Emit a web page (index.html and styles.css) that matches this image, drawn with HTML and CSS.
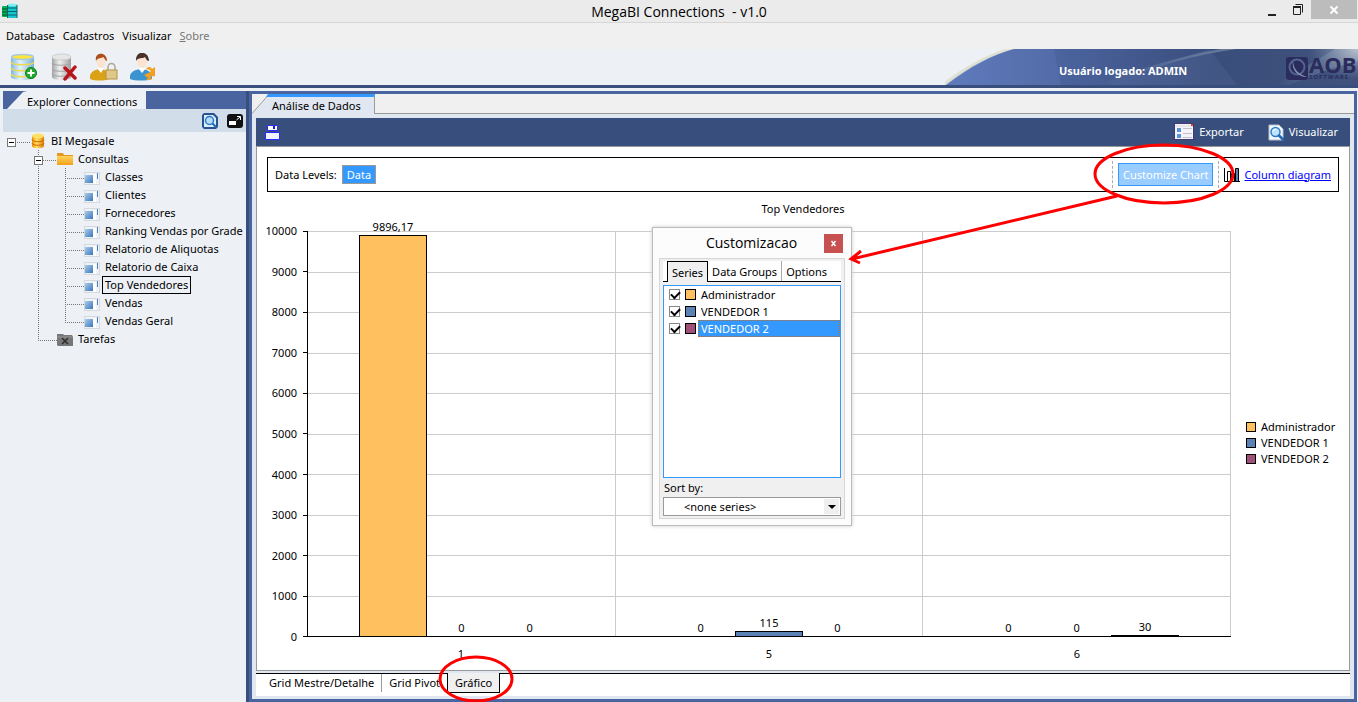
FILE: index.html
```html
<!DOCTYPE html>
<html lang="pt-BR">
<head>
<meta charset="utf-8">
<title>MegaBI Connections - v1.0</title>
<link rel="stylesheet" href="styles.css">
</head>
<body>
<svg class="defs" aria-hidden="true">
  <defs>
    <linearGradient id="gDoc" x1="0" y1="0" x2="1" y2="1"><stop offset="0" stop-color="#a8cbea"/><stop offset="1" stop-color="#3c78ba"/></linearGradient>
    <linearGradient id="gDb" x1="0" x2="1"><stop offset="0" stop-color="#7fb8dc"/><stop offset=".4" stop-color="#e4f3fb"/><stop offset="1" stop-color="#79afd2"/></linearGradient>
    <linearGradient id="gGray" x1="0" x2="1"><stop offset="0" stop-color="#a4a4a4"/><stop offset=".4" stop-color="#efefef"/><stop offset="1" stop-color="#9e9e9e"/></linearGradient>
    <linearGradient id="gGold" x1="0" x2="1"><stop offset="0" stop-color="#f08c00"/><stop offset=".4" stop-color="#ffe36a"/><stop offset="1" stop-color="#e07800"/></linearGradient>
    <linearGradient id="gFolder" x1="0" y1="0" x2="0" y2="1"><stop offset="0" stop-color="#ffd45c"/><stop offset="1" stop-color="#f3a01c"/></linearGradient>
    <linearGradient id="gBanner" x1="0" x2="1"><stop offset="0" stop-color="#5c78ba"/><stop offset=".3" stop-color="#4a629c"/><stop offset=".65" stop-color="#3a4e7c"/><stop offset="1" stop-color="#40527c"/></linearGradient>
    <linearGradient id="gRay" x1="0" x2="1"><stop offset="0" stop-color="#8fa2bb" stop-opacity="0"/><stop offset="1" stop-color="#93a4b8" stop-opacity=".55"/></linearGradient>
    <radialGradient id="gCorner" cx="1" cy="0" r="1"><stop offset="0" stop-color="#c3ccd4" stop-opacity=".9"/><stop offset="1" stop-color="#8595b0" stop-opacity="0"/></radialGradient>
    <symbol id="query" viewBox="0 0 16 14">
      <rect x=".5" y="1.500" width="15" height="12" fill="#eef1f5" stroke="#d3d9df"/>
      <rect x="1" y="4" width="8" height="8" fill="url(#gDoc)"/>
      <rect x="9" y="3" width="3" height="10" fill="#fff"/>
      <rect x="13" y="2" width="1" height="6" fill="#4b82be"/>
    </symbol>
    <symbol id="magnifier" viewBox="0 0 16 16">
      <path d="M1 .5h10l4 4v11H1z" fill="#f4f8fc" stroke="#b4bfca"/>
      <circle cx="7.500" cy="7.500" r="4.500" fill="#bfe3fb" stroke="#2a7cc8" stroke-width="1.500"/>
      <path d="M5 7a3 3 0 0 1 3-2.500" fill="none" stroke="#fff"/>
      <path d="M11 11l4 4" stroke="#2468b4" stroke-width="2.500" stroke-linecap="round"/>
    </symbol>
  </defs>
</svg>

<div class="window">
  <header class="titlebar">
    <svg class="app-icon" viewBox="0 0 16 16" width="16" height="16">
      <rect x="0" y="3" width="7" height="11" rx="1" fill="#06b358"/><path d="M0 6h7M0 9h7M0 12h7" stroke="#03502c"/>
      <rect x="6" y="1" width="9" height="14" rx="1" fill="#16c6cc"/><ellipse cx="10.500" cy="2" rx="4.500" ry="1.500" fill="#7ff0ee"/><path d="M6 5h9M6 8.500h9M6 12h9M5.500 2v13M15 2v13" stroke="#07636a"/>
    </svg>
    <h1 class="title">MegaBI Connections&nbsp; - v1.0</h1>
    <div class="window-buttons">
      <button class="win-btn" aria-label="Minimize"><svg width="12" height="14"><path d="M2 12h8" stroke="#222" stroke-width="2"/></svg></button>
      <button class="win-btn" aria-label="Restore"><svg width="12" height="14"><path d="M3.500 1.500h7v8" fill="none" stroke="#222"/><path d="M1.500 3.500h7v8h-7z" fill="none" stroke="#222"/><path d="M1 4h8" stroke="#222" stroke-width="2"/></svg></button>
      <button class="win-btn win-close" aria-label="Close"><svg width="10" height="10"><path d="M1.500 1.500l7 7M8.500 1.500l-7 7" stroke="#fff" stroke-width="2"/></svg></button>
    </div>
  </header>

  <nav class="menubar">
    <button>Database</button><button>Cadastros</button><button>Visualizar</button><button class="dim"><u>S</u>obre</button>
  </nav>

  <div class="toolbar">
    <div class="tools">
      <button aria-label="Add database"><svg width="28" height="28" viewBox="0 0 28 28">
        <path d="M1 4v20c0 4 23 4 23 0V4z" fill="url(#gDb)"/>
        <path d="M1 9c0 3.500 23 3.500 23 0M1 15c0 3.500 23 3.500 23 0M1 21c0 3.500 23 3.500 23 0" fill="none" stroke="#eed94e" stroke-width="1.500"/>
        <ellipse cx="12.500" cy="4" rx="11" ry="2.500" fill="#ffe53d" stroke="#a9cbdc" stroke-width="1.500"/>
        <circle cx="21" cy="20" r="5.500" fill="#1faa2e" stroke="#0d7c1b"/><path d="M21 16.500v7M17.500 20h7" stroke="#fff" stroke-width="2"/>
      </svg></button>
      <button aria-label="Remove database"><svg width="28" height="28" viewBox="0 0 28 28">
        <path d="M2 4v20c0 4 19 4 19 0V4z" fill="url(#gGray)"/>
        <path d="M2 10c0 3 19 3 19 0M2 16c0 3 19 3 19 0M2 21c0 3 19 3 19 0" fill="none" stroke="#a2a2a2"/>
        <ellipse cx="11.500" cy="4" rx="9.500" ry="3" fill="#e6e6e6" stroke="#cfcfcf"/>
        <path d="M15 15l10 10M25 14L15 26" stroke="#b9131b" stroke-width="3.500" stroke-linecap="round"/>
      </svg></button>
      <button aria-label="User permissions"><svg width="28" height="28" viewBox="0 0 28 28">
        <path d="M0 26c-1-7 4-9 10-10 6 1 9 2 9 10-5 2-14 2-19 0z" fill="#dba118"/>
        <path d="M7 15l4 5 3-5z" fill="#fff"/>
        <ellipse cx="11" cy="9" rx="4.500" ry="6" fill="#fbe3d1"/><path d="M6 8c-2-9 11-10 11 0-2 0-2-3-4-4-2 2-5 0-7 4z" fill="#ad4c1c"/>
        <path d="M18 18v-4a3.500 3.500 0 0 1 7 0v4" fill="none" stroke="#b0a890" stroke-width="1.500"/>
        <rect x="16" y="17" width="11" height="9" fill="#e0c88a" stroke="#b69443"/>
      </svg></button>
      <button aria-label="Switch user"><svg width="28" height="28" viewBox="0 0 28 28">
        <path d="M0 26c-1-7 4-9 11-10 7 1 11 2 11 10-5 2-17 2-22 0z" fill="#3b94d0"/>
        <path d="M8 15l4 5 4-5z" fill="#fff"/>
        <ellipse cx="12" cy="9" rx="5" ry="6" fill="#fbe3d1"/><path d="M6 8c-1-11 13-11 13 0-2 0-3-2-4-4-2 2-7 0-9 4z" fill="#493129"/>
        <path d="M16 16c3-3 5-2 6 0l3-2v6h-6l2-2c-2-2-3-1-5-2zM25 23c-1 1-3 0-4-1v5h-5l2-2-4-3 4-2h7z" fill="#f2a01e"/>
      </svg></button>
    </div>
    <div class="banner">
      <svg class="banner-art" viewBox="0 0 413 36" preserveAspectRatio="xMaxYMid slice">
        <path d="M-5 36C20 17 41 6 60 0h20v36z" fill="#d9dcc8" opacity=".7"/>
        <path d="M1 36C26 17 47 6 69 0H413V36z" fill="url(#gBanner)"/>
        <path d="M109 0l7 36H0Q35 8 69 0z" fill="#6d89c8" opacity=".22"/>
        <path d="M165 36Q230 8 292 0h-16Q218 10 152 36z" fill="url(#gRay)"/>
        <path d="M264 0l28 36H165Q230 10 264 0z" fill="#7e95c0" opacity=".13"/>
        <path d="M330 36L390 0h23v12Q375 22 345 36z" fill="url(#gRay)"/>
        <rect x="363" width="50" height="30" fill="url(#gCorner)"/>
        <rect x="341" y="8" width="22" height="23" rx="3" fill="#2a2c5c"/>
        <circle cx="352" cy="18" r="7.500" fill="none" stroke="#52638f" stroke-width="2"/><path d="M348 11c0 9 5 14 14 17-9 0-16-7-14-17z" fill="#8895b5"/>
      </svg>
      <strong class="user">Usuário logado: ADMIN</strong>
      <div class="logo"><span class="logo-name">AOB</span><span class="logo-sub">SOFTWARE</span></div>
    </div>
  </div>

  <div class="workspace">
    <aside class="explorer">
      <div class="explorer-tabs"><button class="explorer-tab">Explorer Connections</button></div>
      <div class="explorer-tools">
        <button aria-label="Search"><svg width="16" height="16" viewBox="0 0 16 16"><path d="M2 0h10l4 4v10l-2 2H2l-2-2V2z" fill="#24538f"/><path d="M2 2h9l3 3v9H2z" fill="#dcebf8"/><circle cx="7.500" cy="7.500" r="4" fill="#b5dcfa" stroke="#2a7cc8" stroke-width="1.500"/><path d="M10.500 10.500l4 4" stroke="#2468b4" stroke-width="2"/></svg></button>
        <button aria-label="Expand"><svg width="16" height="14" viewBox="0 0 16 14"><rect width="16" height="14" rx="3" fill="#111"/><rect x="2" y="7" width="7" height="4" fill="#fff"/><path d="M10 2.500h3.500V6M13 3L9.500 6" fill="none" stroke="#fff"/></svg></button>
      </div>
      <ul class="tree">
        <li class="row"><span class="guide root"><button class="expander" aria-label="Collapse"></button></span><svg width="14" height="16" viewBox="0 0 14 16"><path d="M1 3v10c0 3 12 3 12 0V3z" fill="url(#gGold)"/><ellipse cx="7" cy="3" rx="6" ry="2.500" fill="#ffe067"/><path d="M1 6.500c0 3 12 3 12 0M1 10c0 3 12 3 12 0" fill="none" stroke="#cb6a00"/></svg><span class="label root-label">BI Megasale</span></li>
        <li class="row level1"><span class="guide branch"><button class="expander" aria-label="Collapse"></button></span><svg width="16" height="16" viewBox="0 0 16 16"><path d="M0 2h6l1 2h9v10H0z" fill="#e49722"/><path d="M0 5h16v9H0z" fill="url(#gFolder)"/></svg><span class="label">Consultas</span></li>
        <li class="row level2"><span class="guide pipe"></span><span class="guide tee"></span><svg width="16" height="16"><use href="#query" y="1"/></svg><span class="label">Classes</span></li>
        <li class="row level2"><span class="guide pipe"></span><span class="guide tee"></span><svg width="16" height="16"><use href="#query" y="1"/></svg><span class="label">Clientes</span></li>
        <li class="row level2"><span class="guide pipe"></span><span class="guide tee"></span><svg width="16" height="16"><use href="#query" y="1"/></svg><span class="label">Fornecedores</span></li>
        <li class="row level2"><span class="guide pipe"></span><span class="guide tee"></span><svg width="16" height="16"><use href="#query" y="1"/></svg><span class="label">Ranking Vendas por Grade</span></li>
        <li class="row level2"><span class="guide pipe"></span><span class="guide tee"></span><svg width="16" height="16"><use href="#query" y="1"/></svg><span class="label">Relatorio de Aliquotas</span></li>
        <li class="row level2"><span class="guide pipe"></span><span class="guide tee"></span><svg width="16" height="16"><use href="#query" y="1"/></svg><span class="label">Relatorio de Caixa</span></li>
        <li class="row level2"><span class="guide pipe"></span><span class="guide tee"></span><svg width="16" height="16"><use href="#query" y="1"/></svg><span class="label selected">Top Vendedores</span></li>
        <li class="row level2"><span class="guide pipe"></span><span class="guide tee"></span><svg width="16" height="16"><use href="#query" y="1"/></svg><span class="label">Vendas</span></li>
        <li class="row level2"><span class="guide pipe"></span><span class="guide tee end"></span><svg width="16" height="16"><use href="#query" y="1"/></svg><span class="label">Vendas Geral</span></li>
        <li class="row level2"><span class="guide tee end"></span><svg width="16" height="14" viewBox="0 0 16 14"><path d="M0 2h6l1 1h8l1 2v9H1l-1-1z" fill="#777"/><path d="M0 5h16" stroke="#969696"/><path d="M5 6l6 6M11 6l-6 6" stroke="#2c2c2c" stroke-width="1.500"/></svg><span class="label">Tarefas</span></li>
      </ul>
    </aside>

    <main class="analysis">
      <div class="doc-tabs">
        <svg class="slant" width="18" height="20" viewBox="0 0 18 20"><path d="M0 20L17 1h1v19z" fill="#e1e7f0"/><path d="M0 19.500L16 1.500" stroke="#999" fill="none"/><path d="M16 0h2v3h-4z" fill="#3399ff"/></svg>
        <button class="doc-tab">Análise de Dados</button>
        <span class="tab-rest"></span>
      </div>
      <div class="doc">
        <div class="doc-toolbar">
          <button class="save" aria-label="Save"><svg width="16" height="16" viewBox="0 0 16 16"><path d="M3.500 1.500h10v5h-10z" fill="#fff" stroke="#2a2aff"/><rect x="9" y="2" width="2" height="3" fill="#1c1cd8"/><path d="M1.500 8.500h14v7h-14z" fill="#f2f2ff" stroke="#2a2aff"/></svg></button>
          <button class="action"><svg width="20" height="18" viewBox="0 0 20 18"><rect x=".5" y=".5" width="19" height="16" fill="#f4f4fa" stroke="#403a7a"/><path d="M1 3h18" stroke="#dcd8dc"/><rect x="17" y="1" width="2" height="2" fill="#d42"/><path d="M3 5h4v4H3zM3 11h4v4H3z" fill="#5794dc"/><path d="M9 5.500h9M9 10.500h9M9 14.500h9" stroke="#c1c1c8"/></svg>Exportar</button>
          <button class="action"><svg width="16" height="17"><use href="#magnifier"/></svg>Visualizar</button>
        </div>
        <section class="chart-panel">
          <div class="chart-options">
            <span>Data Levels:</span><button class="data-level">Data</button>
            <span class="customize-wrap"><button class="customize">Customize Chart</button></span>
            <svg class="col-icon" width="16" height="14" viewBox="0 0 16 14"><path d="M.5 0v13.500H16" fill="none" stroke="#000"/><path d="M3.500 3.500h3v10h-3z" fill="#fff" stroke="#000"/><path d="M7.500 5.500h3v8h-3z" fill="#ffc060" stroke="#000"/><path d="M11.500 .5h3v13h-3z" fill="#5a82b4" stroke="#000"/></svg>
            <a href="#">Column diagram</a>
          </div>
          <h2 class="chart-title">Top Vendedores</h2>
          <div class="chart">
            <div class="y-axis"><span>10000</span><span>9000</span><span>8000</span><span>7000</span><span>6000</span><span>5000</span><span>4000</span><span>3000</span><span>2000</span><span>1000</span><span>0</span></div>
            <div class="plot">
              <div class="gridlines"><i></i><i></i><i></i><i></i><i></i><i></i><i></i><i></i><i></i><i></i></div>
              <div class="categories">
                <div class="category"><div class="value"><span>9896,17</span><b class="bar orange" style="height:98.96%"></b></div><div class="value"><span>0</span></div><div class="value"><span>0</span></div></div>
                <div class="category"><div class="value"><span>0</span></div><div class="value"><span>115</span><b class="bar blue" style="height:1.15%"></b></div><div class="value"><span>0</span></div></div>
                <div class="category"><div class="value"><span>0</span></div><div class="value"><span>0</span></div><div class="value"><span>30</span><b class="bar plum" style="height:0.3%"></b></div></div>
              </div>
            </div>
            <ul class="legend"><li><i class="swatch orange"></i>Administrador</li><li><i class="swatch blue"></i>VENDEDOR 1</li><li><i class="swatch plum"></i>VENDEDOR 2</li></ul>
            <div class="x-axis"><span>1</span><span>5</span><span>6</span></div>
          </div>
        </section>
        <div class="view-tabs"><button>Grid Mestre/Detalhe</button><button>Grid Pivot</button><button class="current">Gráfico</button></div>
      </div>
    </main>
  </div>

  <div class="dialog" role="dialog" aria-labelledby="dlg-title">
    <div class="dialog-head"><h2 id="dlg-title">Customizacao</h2><button class="dialog-close" aria-label="Close"><svg width="7" height="7"><path d="M1.500 1l4 5M5.500 1l-4 5" stroke="#fff" stroke-width="1.500"/></svg></button></div>
    <div class="dialog-body">
      <div class="dialog-tabs"><button class="current">Series</button><button>Data Groups</button><button>Options</button></div>
      <div class="series-list">
        <label><input type="checkbox" checked><i class="swatch orange"></i><span>Administrador</span></label>
        <label><input type="checkbox" checked><i class="swatch blue"></i><span>VENDEDOR 1</span></label>
        <label><input type="checkbox" checked><i class="swatch plum"></i><span class="active">VENDEDOR 2</span></label>
      </div>
      <label class="sort-label" for="sort">Sort by:</label>
      <div class="sort-box"><select id="sort"><option>&lt;none series&gt;</option></select><svg width="15" height="15" viewBox="0 0 15 15"><rect width="15" height="15" fill="#efefef"/><path d="M4 6h8L8 10z" fill="#000"/></svg></div>
    </div>
  </div>

  <svg class="marks" aria-hidden="true" width="1358" height="702" fill="none" stroke="#f00" stroke-width="3">
    <ellipse cx="1164" cy="174" rx="69" ry="29"/>
    <path d="M1117 196L852 259M861 251l-10 8 9 4"/>
    <ellipse cx="476" cy="679" rx="36" ry="22"/>
  </svg>
</div>
</body>
</html>
```
FILE: styles.css
```css
* { box-sizing: border-box; }
body { margin: 0; font: 12px/16px "Noto Sans", "Open Sans", sans-serif; color: #000; }
button { margin: 0; padding: 0; border: 0; background: none; font: inherit; color: inherit; white-space: nowrap; }
svg { display: block; flex: none; }
h1, h2 { margin: 0; font-weight: 400; }
ul { list-style: none; margin: 0; padding: 0; }
.defs { position: absolute; width: 0; height: 0; }
.window { position: relative; display: flex; flex-direction: column; height: 100vh; overflow: hidden; background: #edf1f6; }

.titlebar { display: grid; grid-template-columns: 140px 1fr 140px; height: 23px; background: #ebebeb; border-bottom: 1px solid #d6d6d6; }
.app-icon { margin: 3px 0 0 2px; }
.title { font-family: "Open Sans", sans-serif; font-size: 14px; line-height: 23px; text-align: center; }
.window-buttons { display: flex; justify-content: flex-end; align-items: flex-start; padding-right: 1px; }
.win-btn { display: grid; place-items: center; width: 26px; height: 19px; }
.win-close { width: 46px; background: #bcbcbc; }

.menubar { display: flex; gap: 8px; height: 26px; padding: 0 6px; background: #f0f0f0; font-size: 11px; }
.dim { color: #777; }

.toolbar { display: flex; justify-content: space-between; height: 39px; border-bottom: 3px solid #384f7d; background: #edf1f6; }
.tools { display: flex; align-items: center; gap: 12px; padding-left: 10px; }
.banner { display: grid; width: 413px; }
.banner-art, .user, .logo { grid-area: 1 / 1; }
.banner-art { width: 100%; height: 36px; }
.user { align-self: center; padding: 7px 0 0 114px; color: #fff; font-size: 11px; }
.logo { justify-self: end; align-self: start; display: flex; flex-direction: column; width: 49px; padding-top: 6px; color: #2a2c5c; font-family: "Open Sans", sans-serif; font-weight: 700; }
.logo-name { font-size: 22px; line-height: 19px; }
.logo-sub { font-size: 6px; line-height: 6px; letter-spacing: 1px; }

.workspace { flex: 1; display: flex; min-height: 0; padding: 3px 1px 0 3px; }
.explorer { flex: none; display: flex; flex-direction: column; width: 243px; background: #edf1f6; font-size: 11px; }
.explorer-tabs { height: 18px; background: #4a64a0; }
.explorer-tab { height: 18px; padding: 3px 9px 0 24px; background: #edf1f6; clip-path: polygon(4px 100%, 20px 5%, 24px 0, 100% 0, 100% 100%); }
.explorer-tools { display: flex; justify-content: flex-end; align-items: center; gap: 9px; height: 23px; padding-right: 3px; background: #d1dde9; }
.row { display: flex; align-items: center; height: 18px; padding-left: 4px; }
.level1 { padding-left: 31px; }
.level2 { padding-left: 35px; }
.guide { --dots-x: repeating-linear-gradient(90deg, #777 0 1px, transparent 1px 2px); --dots-y: repeating-linear-gradient(#777 0 1px, transparent 1px 2px); flex: none; height: 18px; background-repeat: no-repeat; }
.root { width: 24px; background-image: var(--dots-x); background-size: 100% 1px; background-position: 0 10px; }
.branch { width: 23px; background-image: var(--dots-x), var(--dots-y); background-size: 100% 1px, 1px 100%; background-position: 5px 10px, 4px 0; }
.pipe { width: 27px; background-image: var(--dots-y); background-size: 1px 100%; }
.tee { width: 19px; background-image: var(--dots-x), var(--dots-y); background-size: 100% 1px, 1px 100%; background-position: 0 10px, 0 0; }
.tee.end { background-size: 100% 1px, 1px 10px; }
.expander { display: block; width: 9px; height: 9px; margin-top: 6px; border: 1px solid #777; background: linear-gradient(#000, #000) center / 5px 1px no-repeat #fff; }
.label { margin-left: 3px; padding: 0 2px; white-space: nowrap; line-height: 16px; }
.root-label { margin-left: 4px; }
.selected { outline: 1px solid #000; }

.analysis { flex: 1; display: flex; flex-direction: column; min-width: 0; border: 3px solid #4a64a0; background: #e1e7f0; box-shadow: -3px 0 #384f7d; margin-left: 3px; font-size: 11px; }
.doc-tabs { display: flex; height: 20px; background: #f0f0f0; }
.doc-tab { padding: 1px 13px 0 2px; background: #e1e7f0; border-top: 3px solid #3399ff; border-right: 1px solid #999; }
.tab-rest { flex: 1; border-bottom: 1px solid #999; }
.doc { flex: 1; display: flex; flex-direction: column; min-height: 0; margin: 4px 4px 3px; }
.doc-toolbar { display: flex; align-items: center; gap: 24px; height: 28px; padding: 0 12px 0 8px; background: #384f7d; color: #fff; }
.save { margin-right: auto; }
.action { display: flex; align-items: center; gap: 5px; }
.chart-panel { flex: 1; display: flex; flex-direction: column; min-height: 0; border: 1px solid #999; background: #fff; }
.chart-options { display: flex; align-items: center; height: 35px; margin: 10px 10px 0 10px; padding: 0 7px; border: 1px solid #000; }
.data-level { height: 19px; margin-left: 5px; padding: 0 4px; border: 1px solid #999; background: #3399ff; color: #fff; }
.customize-wrap { display: flex; align-items: center; height: 27px; margin-left: auto; padding: 0 5px; border: dashed #aaa; border-width: 0 1px; }
.customize { height: 23px; padding: 0 4px; border: 1px solid #3399ff; background: #99ccff; color: #fff; }
.col-icon { margin: 0 4px 0 5px; }
.chart-options a { color: #00f; }
.chart-title { margin-top: 9px; font-size: 11px; line-height: 16px; text-align: center; }
.chart { flex: 1; display: grid; grid-template-columns: 50px 1fr 118px; grid-template-rows: 1fr 33px; min-height: 0; padding-top: 14px; }
.y-axis { display: flex; flex-direction: column; justify-content: space-between; margin: -8px 0; }
.y-axis span { display: flex; align-items: center; justify-content: flex-end; gap: 6px; height: 16px; }
.y-axis span::after { content: ""; width: 4px; height: 1px; background: #000; }
.plot { display: grid; border: solid #000; border-width: 0 0 1px 1px; }
.gridlines, .categories { grid-area: 1 / 1; display: flex; min-height: 0; }
.gridlines { flex-direction: column; }
.gridlines i { flex: 1; border-top: 1px solid #ccc; }
.category { flex: 1; display: flex; justify-content: center; border-right: 1px solid #ccc; }
.value { display: flex; flex-direction: column; justify-content: flex-end; width: 22.3%; text-align: center; }
.value span { height: 16px; margin-top: -16px; flex: none; }
.bar { flex: none; border: 1px solid #000; border-bottom: 0; }
.orange { background: #ffc060; }
.blue { background: #5a82b4; }
.plum { background: #a05078; }
.legend { align-self: center; padding: 18px 0 0 15px; }
.legend li { display: flex; align-items: center; gap: 5px; height: 16px; }
.swatch { flex: none; width: 10px; height: 10px; border: 1px solid #000; }
.x-axis { grid-column: 2; display: flex; padding-top: 9px; }
.x-axis span { flex: 1; text-align: center; }
.view-tabs { display: flex; flex: none; height: 23px; margin-top: 2px; padding-left: 5px; border-top: 1px solid #000; background: #fff; }
.view-tabs button { height: 18px; padding: 0 7px; }
.view-tabs button:nth-child(1) { padding-left: 8px; }
.view-tabs button:nth-child(2) { border-left: 1px solid #999; }
.view-tabs .current { height: 20px; margin-top: -1px; border: 1px solid #000; border-top: 0; background: #f0f0f0; }

.dialog { position: absolute; left: 652px; top: 227px; width: 200px; padding: 0 6px 6px; border: 1px solid #bbb; background: #fcfcfc; box-shadow: 0 0 4px #ccc; font-size: 11px; }
.dialog-head { display: flex; align-items: center; height: 30px; }
.dialog-head h2 { flex: 1; padding-left: 20px; font-family: "Open Sans", sans-serif; font-size: 14px; text-align: center; }
.dialog-close { display: grid; place-items: center; width: 19px; height: 19px; margin-right: 2px; background: #c75050; }
.dialog-body { padding: 2px 3px; border: 1px solid #d6d6d6; background: #f0f0f0; }
.dialog-tabs { display: flex; padding-left: 4px; background: #fff; border-bottom: 1px solid #000; }
.dialog-tabs button { height: 20px; padding: 2px 4px 0; }
.dialog-tabs button:nth-child(3) { border-left: 1px solid #aaa; }
.dialog-tabs .current { margin-bottom: -1px; height: 21px; border: 1px solid #000; border-bottom: 0; background: #f0f0f0; }
.series-list { height: 193px; margin-top: 3px; border: 1px solid #3399ff; background: #fff; }
.series-list label { display: flex; align-items: center; height: 17px; padding-left: 5px; }
.series-list input { appearance: none; width: 11px; height: 11px; margin: 0 5px 0 0; border: 1px solid #888; background: #fff; }
.series-list input:checked::before { content: ""; display: block; width: 7px; height: 4px; margin: 1px; border: solid #000; border-width: 0 0 2px 2px; transform: rotate(-45deg); }
.series-list .swatch { width: 11px; height: 11px; }
.series-list span { flex: 1; margin-left: 2px; padding-left: 3px; line-height: 17px; }
.active { background: #3399ff; color: #fff; outline: 1px dotted #c96a1a; outline-offset: -1px; }
.sort-label { display: block; margin: 2px 0 1px 1px; }
.sort-box { display: flex; align-items: center; height: 19px; padding-right: 1px; border: 1px solid #999; background: #fff; }
.sort-box select { flex: 1; min-width: 0; appearance: none; border: 0; background: none; padding: 0 0 0 20px; font: inherit; color: #000; }
.marks { position: absolute; left: 0; top: 0; pointer-events: none; }
```
